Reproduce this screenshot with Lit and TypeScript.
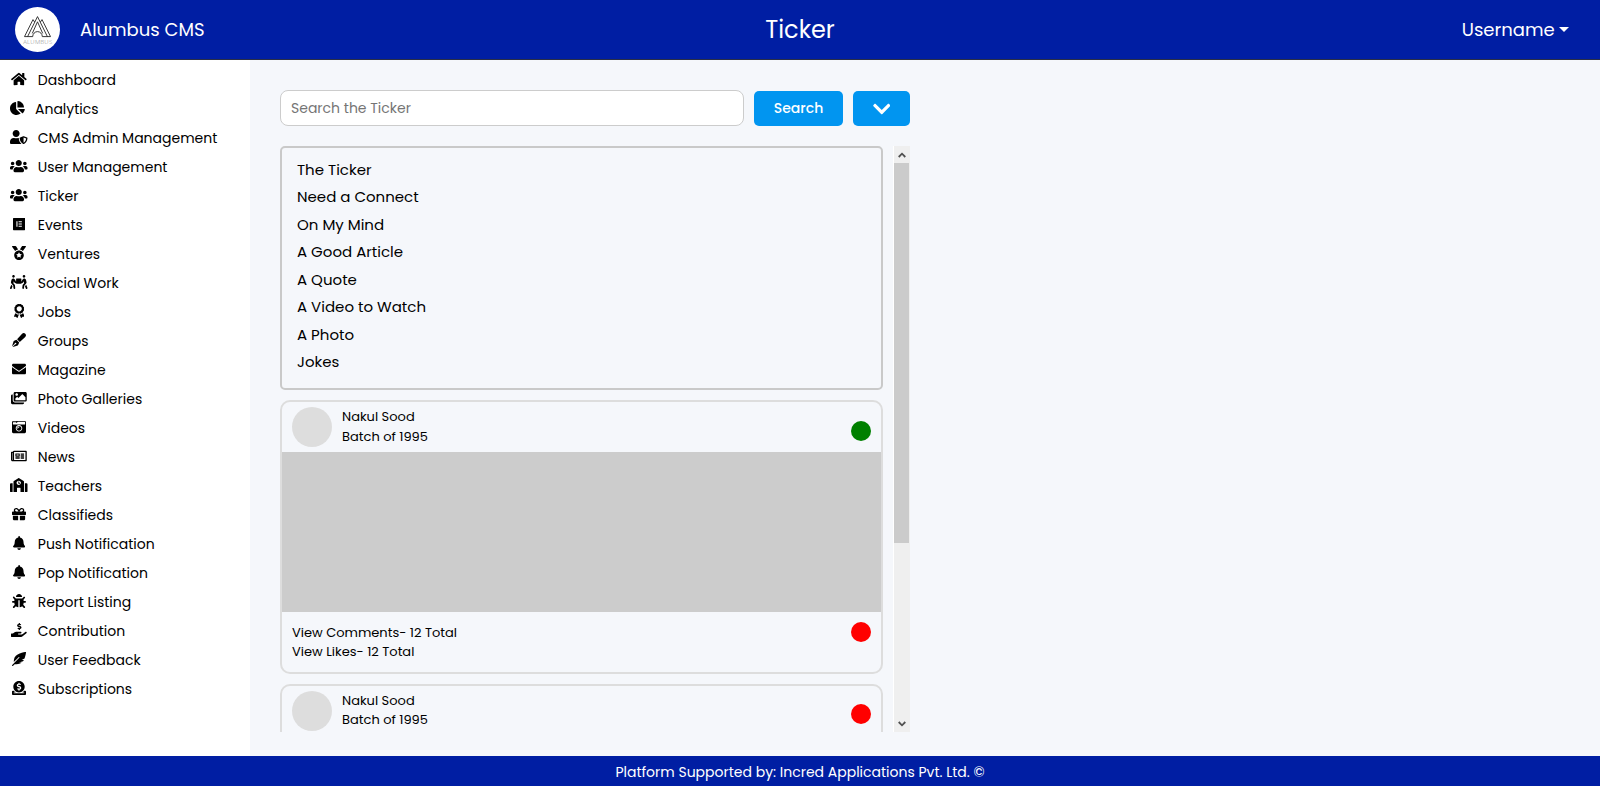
import { LitElement, html, css, svg } from "lit";
import { customElement } from "lit/decorators.js";

interface Glyph { w: number; d: string }

const ICONS: Record<string, Glyph> = {
  home: { w: 576, d: "M280.37 148.26L96 300.11V464a16 16 0 0 0 16 16l112.06-.29a16 16 0 0 0 15.92-16V368a16 16 0 0 1 16-16h64a16 16 0 0 1 16 16v95.64a16 16 0 0 0 16 16.05L464 480a16 16 0 0 0 16-16V300L295.67 148.26a12.19 12.19 0 0 0-15.3 0zM571.6 251.47L488 182.56V44.05a12 12 0 0 0-12-12h-56a12 12 0 0 0-12 12v72.61L318.47 43a48 48 0 0 0-61 0L4.34 251.47a12 12 0 0 0-1.6 16.9l25.5 31A12 12 0 0 0 45.15 301l235.22-193.74a12.19 12.19 0 0 1 15.3 0L530.9 301a12 12 0 0 0 16.9-1.6l25.5-31a12 12 0 0 0-1.7-16.93z" },
  pie: { w: 544, d: "M527.79 288H290.5l158.03 158.03c6.04 6.04 15.98 6.53 22.19.68 38.7-36.46 65.32-85.61 73.13-140.86 1.34-9.46-6.51-17.85-16.06-17.85zm-15.83-64.8C503.72 103.74 408.26 8.28 288.8.04 279.68-.59 272 7.1 272 16.24V240h223.77c9.14 0 16.82-7.68 16.19-16.8zM224 288V50.71c0-9.55-8.39-17.4-17.84-16.06C86.99 51.49-4.1 155.6.14 280.37 4.5 408.51 114.83 513.59 243.03 511.98c50.4-.63 96.97-16.87 135.26-44.03 7.9-5.6 8.42-17.23 1.57-24.08L224 288z" },
  userShield: { w: 640, d: "M622.3 271.1l-115.2-45c-4.1-1.6-12.6-3.7-22.2 0l-115.2 45c-10.7 4.2-17.7 14-17.7 24.9 0 111.6 68.7 188.8 132.9 213.9 9.6 3.7 18 1.6 22.2 0C558.4 489.9 640 420.5 640 296c0-10.9-7-20.7-17.7-24.9zM496 462.4V273.3l95.5 37.3c-5.6 87.1-60.9 135.4-95.5 151.8zM224 256c70.7 0 128-57.3 128-128S294.7 0 224 0 96 57.3 96 128s57.3 128 128 128zm96 40c0-2.5.8-4.8 1.1-7.2-2.5-.1-4.9-.8-7.5-.8h-16.7c-22.2 10.2-46.9 16-72.9 16s-50.6-5.8-72.9-16h-16.7C60.2 288 0 348.2 0 422.4V464c0 26.5 21.5 48 48 48h352c6.8 0 13.3-1.5 19.2-4-54-42.9-99.2-116.7-99.2-212z" },
  users: { w: 640, d: "M96 224c35.3 0 64-28.7 64-64s-28.7-64-64-64-64 28.7-64 64 28.7 64 64 64zm448 0c35.3 0 64-28.7 64-64s-28.7-64-64-64-64 28.7-64 64 28.7 64 64 64zm32 32h-64c-17.6 0-33.5 7.1-45.1 18.6 40.3 22.1 68.9 62 75.1 109.4h66c17.7 0 32-14.3 32-32v-32c0-35.3-28.7-64-64-64zm-256 0c61.9 0 112-50.1 112-112S381.9 32 320 32 208 82.1 208 144s50.1 112 112 112zm76.8 32h-8.3c-20.8 10-43.9 16-68.5 16s-47.6-6-68.5-16h-8.3C179.6 288 128 339.6 128 403.2V432c0 26.5 21.5 48 48 48h288c26.5 0 48-21.5 48-48v-28.8c0-63.6-51.6-115.2-115.2-115.2zm-223.7-13.4C161.5 263.1 145.6 256 128 256H64c-35.3 0-64 28.7-64 64v32c0 17.7 14.3 32 32 32h65.9c6.3-47.4 34.9-87.3 75.2-109.4z" },
  elementor: { w: 448, d: "M425.6 32H22.4C10 32 0 42 0 54.4v403.2C0 470 10 480 22.4 480h403.2c12.4 0 22.4-10 22.4-22.4V54.4C448 42 438 32 425.6 32M164.3 355.5h-39.8v-199h39.8v199zm159.3 0H204.1v-39.8h119.5v39.8zm0-79.6H204.1v-39.8h119.5v39.8zm0-79.7H204.1v-39.8h119.5v39.8z" },
  medal: { w: 512, d: "M223.75 130.75L154.62 15.54A31.997 31.997 0 0 0 127.18 0H16.03C3.08 0-4.5 14.57 2.92 25.18l111.27 158.96c29.72-27.77 67.52-46.83 109.56-53.39zM495.97 0H384.82c-11.24 0-21.66 5.9-27.44 15.54l-69.13 115.21c42.04 6.56 79.84 25.62 109.56 53.38L509.08 25.18C516.5 14.57 508.92 0 495.97 0zM256 160c-97.2 0-176 78.8-176 176s78.8 176 176 176 176-78.8 176-176-78.8-176-176-176zm92.52 157.26l-37.93 36.96 8.97 52.22c1.6 9.36-8.26 16.51-16.65 12.09L256 393.88l-46.9 24.65c-8.4 4.45-18.25-2.74-16.65-12.09l8.97-52.22-37.93-36.96c-6.82-6.64-3.05-18.23 6.35-19.59l52.43-7.64 23.43-47.52c2.11-4.28 6.19-6.39 10.28-6.39 4.11 0 8.22 2.14 10.33 6.39l23.43 47.52 52.43 7.64c9.4 1.36 13.17 12.95 6.35 19.59z" },
  carry: { w: 640, d: "M128 96c26.5 0 48-21.5 48-48S154.5 0 128 0 80 21.5 80 48s21.5 48 48 48zm384 0c26.5 0 48-21.5 48-48S538.5 0 512 0s-48 21.5-48 48 21.5 48 48 48zm125.7 372.1l-44-110-41.1 46.4-2 18.2 27.7 69.2c5 12.5 17 20.1 29.7 20.1 4 0 8-.7 11.9-2.3 16.4-6.6 24.4-25.2 17.8-41.6zm-34.2-209.8L585 178.1c-4.6-20-18.6-36.8-37.5-44.9-18.5-8-39-6.7-56.1 3.3-22.7 13.4-39.7 34.5-48.1 59.4L432 229.8 416 240v-96c0-8.8-7.2-16-16-16H240c-8.8 0-16 7.2-16 16v96l-16.1-10.2-11.3-33.9c-8.3-25-25.4-46-48.1-59.4-17.2-10-37.6-11.3-56.1-3.3-18.9 8.1-32.9 24.9-37.5 44.9l-18.4 80.2c-4.6 20 .7 41.2 14.4 56.7l67.2 75.9 10.1 92.6C130 499.8 143.8 512 160 512c1.2 0 2.3-.1 3.5-.2 17.6-1.9 30.2-17.7 28.3-35.3l-10.1-92.8c-1.5-13-6.9-25.1-15.6-35l-43.3-49 17.6-70.3 6.8 20.4c4.1 12.5 11.9 23.4 24.5 32.6l51.1 32.5c4.6 2.9 12.1 4.6 17.2 5h160c5.1-.4 12.6-2.1 17.2-5l51.1-32.5c12.6-9.2 20.4-20 24.5-32.6l6.8-20.4 17.6 70.3-43.3 49c-8.7 9.9-14.1 22-15.6 35l-10.1 92.8c-1.9 17.6 10.8 33.4 28.3 35.3 1.2.1 2.3.2 3.5.2 16.1 0 30-12.1 31.8-28.5l10.1-92.6 67.2-75.9c13.6-15.5 19-36.7 14.4-56.7zM46.3 358.1l-44 110c-6.6 16.4 1.4 35 17.8 41.6 16.8 6.6 35.1-1.7 41.6-17.8l27.7-69.2-2-18.2-41.1-46.4z" },
  award: { w: 384, d: "M97.12 362.63c-8.69-8.69-4.16-6.24-25.12-11.85-9.51-2.55-17.87-7.45-25.43-13.32L1.2 448.7c-4.39 10.77 3.81 22.47 15.43 22.03l52.69-2.01L105.56 507c8 8.44 22.04 5.81 26.43-4.96l52.05-127.62c-10.84 6.04-22.87 9.58-35.31 9.58-19.5 0-37.82-7.59-51.61-21.37zM382.8 448.7l-45.37-111.24c-7.56 5.88-15.92 10.77-25.43 13.32-21.07 5.64-16.45 3.18-25.12 11.85-13.79 13.78-32.12 21.37-51.62 21.37-12.44 0-24.47-3.55-35.31-9.58L252 502.04c4.39 10.77 18.44 13.4 26.43 4.96l36.25-38.28 52.69 2.01c11.62.44 19.82-11.27 15.43-22.03zM263 340c15.28-15.55 17.03-14.21 38.79-20.14 13.89-3.79 24.75-14.84 28.47-28.98 7.48-28.4 5.54-24.97 25.95-45.75 10.17-10.35 14.14-25.44 10.42-39.58-7.47-28.38-7.48-24.42 0-52.83 3.72-14.14-.25-29.23-10.42-39.58-20.41-20.78-18.47-17.36-25.95-45.75-3.72-14.14-14.58-25.19-28.47-28.98-27.88-7.61-24.52-5.62-44.95-26.41-10.17-10.35-25-14.4-38.89-10.61-27.87 7.6-23.98 7.61-51.9 0-13.89-3.79-28.72.25-38.89 10.61-20.41 20.78-17.05 18.8-44.94 26.41-13.89 3.79-24.75 14.84-28.47 28.98-7.47 28.39-5.54 24.97-25.95 45.75-10.17 10.35-14.15 25.44-10.42 39.58 7.47 28.36 7.48 24.4 0 52.82-3.72 14.14.25 29.23 10.42 39.59 20.41 20.78 18.47 17.35 25.95 45.75 3.72 14.14 14.58 25.19 28.47 28.98C104.6 325.96 106.27 325 121 340c13.23 13.47 33.84 15.88 49.74 5.82a39.676 39.676 0 0 1 42.53 0c15.89 10.06 36.5 7.65 49.73-5.82zM97.66 175.96c0-53.03 42.24-96.02 94.34-96.02s94.34 42.99 94.34 96.02-42.24 96.02-94.34 96.02-94.34-42.99-94.34-96.02z" },
  pen: { w: 512, d: "M79.18 282.94a32.005 32.005 0 0 0-20.24 20.24L0 480l4.69 4.69 92.89-92.89c-.66-2.56-1.57-5.03-1.57-7.8 0-17.67 14.33-32 32-32s32 14.33 32 32-14.33 32-32 32c-2.77 0-5.24-.91-7.8-1.57l-92.89 92.89L32 512l176.82-58.94a31.983 31.983 0 0 0 20.24-20.24l33.07-84.07-98.88-98.88-84.07 33.07zM369.25 28.32L186.14 227.81l97.85 97.85 199.49-183.11C568.4 67.48 443.73-55.94 369.25 28.32z" },
  envelope: { w: 512, d: "M502.3 190.8c3.9-3.1 9.7-.2 9.7 4.7V400c0 26.5-21.5 48-48 48H48c-26.5 0-48-21.5-48-48V195.6c0-5 5.7-7.8 9.7-4.7 22.4 17.4 52.1 39.5 154.1 113.6 21.1 15.4 56.7 47.8 92.2 47.6 35.7.3 72-32.8 92.3-47.6 102-74.1 131.6-96.3 154-113.7zM256 320c23.2.4 56.6-29.2 73.4-41.4 132.7-96.3 142.8-104.7 173.4-128.7 5.8-4.5 9.2-11.5 9.2-18.9v-19c0-26.5-21.5-48-48-48H48c-26.5 0-48 21.5-48 48v19c0 7.4 3.4 14.3 9.2 18.9 30.6 23.9 40.7 32.4 173.4 128.7 16.8 12.2 50.2 41.8 73.4 41.4z" },
  images: { w: 576, d: "M480 416v16c0 26.51-21.49 48-48 48H48c-26.51 0-48-21.49-48-48V176c0-26.51 21.49-48 48-48h16v208c0 44.112 35.888 80 80 80h336zm96-80V80c0-26.51-21.49-48-48-48H144c-26.51 0-48 21.49-48 48v256c0 26.51 21.49 48 48 48h384c26.51 0 48-21.49 48-48zM256 128c0 26.51-21.49 48-48 48s-48-21.49-48-48 21.49-48 48-48 48 21.49 48 48zm-96 144l55.515-55.515c4.686-4.686 12.284-4.686 16.971 0L272 256l135.515-135.515c4.686-4.686 12.284-4.686 16.971 0L528 224v112H160v-64z" },
  camera: { w: 512, d: "M48 32C21.5 32 0 53.5 0 80v352c0 26.5 21.5 48 48 48h416c26.5 0 48-21.5 48-48V80c0-26.5-21.5-48-48-48H48zm0 32h106c3.3 0 6 2.7 6 6v20c0 3.3-2.7 6-6 6H38c-3.3 0-6-2.7-6-6V80c0-8.8 7.2-16 16-16zm426 96H38c-3.3 0-6-2.7-6-6v-36c0-3.3 2.7-6 6-6h138l30.2-45.3c1.1-1.7 3-2.7 5-2.7H464c8.8 0 16 7.2 16 16v74c0 3.3-2.7 6-6 6zM256 424c-66.2 0-120-53.8-120-120s53.8-120 120-120 120 53.8 120 120-53.8 120-120 120zm0-208c-48.5 0-88 39.5-88 88s39.5 88 88 88 88-39.5 88-88-39.5-88-88-88zm-48 104c-8.8 0-16-7.2-16-16 0-35.3 28.7-64 64-64 8.8 0 16 7.2 16 16s-7.2 16-16 16c-17.6 0-32 14.4-32 32 0 8.8-7.2 16-16 16z" },
  newspaper: { w: 576, d: "M552 64H112c-20.858 0-38.643 13.377-45.248 32H24c-13.255 0-24 10.745-24 24v272c0 30.928 25.072 56 56 56h496c13.255 0 24-10.745 24-24V88c0-13.255-10.745-24-24-24zM48 392V144h16v248c0 4.411-3.589 8-8 8s-8-3.589-8-8zm480 8H111.422c.374-2.614.578-5.283.578-8V112h416v288zM172 280h136c6.627 0 12-5.373 12-12v-96c0-6.627-5.373-12-12-12H172c-6.627 0-12 5.373-12 12v96c0 6.627 5.373 12 12 12zm28-80h80v40h-80v-40zm-40 140v-24c0-6.627 5.373-12 12-12h136c6.627 0 12 5.373 12 12v24c0 6.627-5.373 12-12 12H172c-6.627 0-12-5.373-12-12zm192 0v-24c0-6.627 5.373-12 12-12h104c6.627 0 12 5.373 12 12v24c0 6.627-5.373 12-12 12H364c-6.627 0-12-5.373-12-12zm0-144v-24c0-6.627 5.373-12 12-12h104c6.627 0 12 5.373 12 12v24c0 6.627-5.373 12-12 12H364c-6.627 0-12-5.373-12-12zm0 72v-24c0-6.627 5.373-12 12-12h104c6.627 0 12 5.373 12 12v24c0 6.627-5.373 12-12 12H364c-6.627 0-12-5.373-12-12z" },
  school: { w: 640, d: "M0 224v272c0 8.84 7.16 16 16 16h80V192H32c-17.67 0-32 14.33-32 32zm360-48h-24v-40c0-4.42-3.58-8-8-8h-16c-4.42 0-8 3.58-8 8v64c0 4.42 3.58 8 8 8h48c4.42 0 8-3.58 8-8v-16c0-4.42-3.58-8-8-8zm137.75-63.96l-160-106.67a32.02 32.02 0 0 0-35.5 0l-160 106.67A32.002 32.002 0 0 0 128 138.66V512h128V368c0-8.84 7.16-16 16-16h96c8.84 0 16 7.16 16 16v144h128V138.67c0-10.7-5.35-20.7-14.25-26.63zM320 256c-44.18 0-80-35.82-80-80s35.82-80 80-80 80 35.82 80 80-35.82 80-80 80zm288-64h-64v320h80c8.84 0 16-7.16 16-16V224c0-17.67-14.33-32-32-32z" },
  gift: { w: 512, d: "M32 448c0 17.7 14.3 32 32 32h160V320H32v128zm256 32h160c17.7 0 32-14.3 32-32V320H288v160zm192-320h-42.1c6.2-12.1 10.1-25.5 10.1-40 0-48.5-39.5-88-88-88-41.6 0-68.5 21.3-103 68.3-34.5-47-61.4-68.3-103-68.3-48.5 0-88 39.5-88 88 0 14.5 3.8 27.9 10.1 40H32c-17.7 0-32 14.3-32 32v80c0 8.8 7.2 16 16 16h480c8.8 0 16-7.2 16-16v-80c0-17.7-14.3-32-32-32zm-326.1 0c-22.1 0-40-17.9-40-40s17.9-40 40-40c19.9 0 34.6 3.3 86.1 80h-86.1zm206.1 0h-86.1c51.4-76.5 65.7-80 86.1-80 22.1 0 40 17.9 40 40s-17.9 40-40 40z" },
  bell: { w: 448, d: "M224 512c35.32 0 63.97-28.65 63.97-64H160.03c0 35.35 28.65 64 63.97 64zm215.39-149.71c-19.32-20.76-55.47-51.99-55.47-154.29 0-77.7-54.48-139.9-127.94-155.16V32c0-17.67-14.32-32-31.98-32s-31.98 14.33-31.98 32v20.84C118.56 68.1 64.08 130.3 64.08 208c0 102.3-36.15 133.53-55.47 154.29-6 6.45-8.66 14.16-8.61 21.71.11 16.4 12.98 32 32.1 32h383.8c19.12 0 32-15.6 32.1-32 .05-7.55-2.61-15.27-8.61-21.71z" },
  bug: { w: 512, d: "M511.988 288.9c-.478 17.43-15.217 31.1-32.653 31.1H424v16c0 21.864-4.882 42.584-13.6 61.145l60.228 60.228c12.496 12.497 12.496 32.758 0 45.255-12.498 12.497-32.759 12.496-45.256 0l-54.736-54.736C345.886 467.965 314.351 480 280 480V236c0-6.627-5.373-12-12-12h-24c-6.627 0-12 5.373-12 12v244c-34.351 0-65.886-12.035-90.636-32.108l-54.736 54.736c-12.498 12.497-32.759 12.496-45.256 0-12.496-12.497-12.496-32.758 0-45.255l60.228-60.228C92.882 378.584 88 357.864 88 336v-16H32.666C15.23 320 .491 306.33.013 288.9-.484 270.816 14.028 256 32 256h56v-58.745l-46.628-46.628c-12.496-12.497-12.496-32.758 0-45.255 12.498-12.497 32.758-12.497 45.256 0L141.255 160h229.489l54.627-54.627c12.498-12.497 32.758-12.497 45.256 0 12.496 12.497 12.496 32.758 0 45.255L424 197.255V256h56c17.972 0 32.484 14.816 31.988 32.9zM257 0c-61.856 0-112 50.144-112 112h224C369 50.144 318.856 0 257 0z" },
  handUsd: { w: 576, d: "M271.06,144.3l54.27,14.3a8.59,8.59,0,0,1,6.63,8.1c0,4.6-4.09,8.4-9.12,8.4h-35.6a30,30,0,0,1-11.19-2.2c-5.24-2.2-11.28-1.7-15.3,2l-19,17.5a11.68,11.68,0,0,0-2.25,2.66,11.42,11.42,0,0,0,3.88,15.74,83.77,83.77,0,0,0,34.51,11.5V240c0,8.8,7.83,16,17.37,16h17.37c9.55,0,17.38-7.2,17.38-16V222.4c32.93-3.6,57.84-31,53.5-63-3.15-23-22.46-41.3-46.56-47.7L282.68,97.4a8.59,8.59,0,0,1-6.63-8.1c0-4.6,4.09-8.4,9.12-8.4h35.6A30,30,0,0,1,332,83.1c5.23,2.2,11.28,1.7,15.3-2l19-17.5A11.31,11.31,0,0,0,368.47,61a11.43,11.43,0,0,0-3.84-15.78,83.82,83.82,0,0,0-34.52-11.5V16c0-8.8-7.82-16-17.37-16H295.37C285.82,0,278,7.2,278,16V33.6c-32.89,3.6-57.85,31-53.51,63C227.63,119.6,247,137.9,271.06,144.3ZM565.3 328.1c-11.8-10.7-30.2-10-42.6 0L430.3 402c-11.3 9.1-25.4 14-40 14H272c-8.8 0-16-7.2-16-16s7.2-16 16-16h78.3c15.9 0 30.7-10.9 33.3-26.6 3.3-20-12.1-37.4-31.6-37.4H192c-27 0-53.1 9.3-74.1 26.3L71.4 384H16c-8.8 0-16 7.2-16 16v96c0 8.8 7.2 16 16 16h356.8c14.5 0 28.6-4.9 40-14L564 377c15.2-12.1 16.4-35.3 1.3-48.9z" },
  feather: { w: 512, d: "M512 0C460.22 3.56 96.44 38.2 71.01 287.61c-3.09 26.66-4.84 53.44-5.99 80.24l178.87-178.69c6.25-6.25 16.4-6.25 22.65 0s6.25 16.38 0 22.63L7.04 471.03c-9.38 9.37-9.38 24.57 0 33.94 9.38 9.37 24.59 9.37 33.98 0l57.13-57.07c42.09-.14 84.15-2.53 125.96-7.36 53.48-5.44 97.02-26.47 132.58-56.54H255.74l146.79-48.88c11.25-14.89 21.37-30.71 30.45-47.12h-81.14l106.54-53.21C500.29 132.86 510.19 26.26 512 0z" },
  donate: { w: 512, d: "M256 416c114.9 0 208-93.1 208-208S370.9 0 256 0 48 93.1 48 208s93.1 208 208 208zM233.8 97.4V80.6c0-9.2 7.4-16.6 16.6-16.6h11.1c9.2 0 16.6 7.4 16.6 16.6v17c15.5.8 30.5 6.1 43 15.4 5.6 4.1 6.2 12.3 1.2 17.1L306 145.6c-3.8 3.7-9.5 3.8-14 1-5.4-3.4-11.4-5.1-17.8-5.1h-38.9c-9 0-16.3 8.2-16.3 18.3 0 8.2 5 15.5 12.1 17.6l62.3 18.7c25.7 7.7 43.7 32.4 43.7 60.1 0 34-26.4 61.5-59.1 62.4v16.8c0 9.2-7.4 16.6-16.6 16.6h-11.1c-9.2 0-16.6-7.4-16.6-16.6v-17c-15.5-.8-30.5-6.1-43-15.4-5.6-4.1-6.2-12.3-1.2-17.1l16.3-15.5c3.8-3.7 9.5-3.8 14-1 5.4 3.4 11.4 5.1 17.8 5.1h38.9c9 0 16.3-8.2 16.3-18.3 0-8.2-5-15.5-12.1-17.6l-62.3-18.7c-25.7-7.7-43.7-32.4-43.7-60.1.1-34 26.4-61.5 59.1-62.4zM480 352h-32.5c-19.6 26-44.6 47.7-73 64h63.8c5.3 0 9.6 3.6 9.6 8v16c0 4.4-4.3 8-9.6 8H73.6c-5.3 0-9.6-3.6-9.6-8v-16c0-4.4 4.3-8 9.6-8h63.8c-28.4-16.3-53.3-38-73-64H32c-17.7 0-32 14.3-32 32v96c0 17.7 14.3 32 32 32h448c17.7 0 32-14.3 32-32v-96c0-17.7-14.3-32-32-32z" },
  chevron: { w: 448, d: "M207.029 381.476L12.686 187.132c-9.373-9.373-9.373-24.569 0-33.941l22.667-22.667c9.357-9.357 24.522-9.375 33.901-.04L224 284.505l154.745-154.021c9.379-9.335 24.544-9.317 33.901.04l22.667 22.667c9.373 9.373 9.373 24.569 0 33.941L240.971 381.476c-9.373 9.372-24.569 9.372-33.942 0z" },
};

const icon = (name: string, size = 14) => {
  const g = ICONS[name];
  return html`<svg width=${(g.w / 512) * size} height=${size} viewBox="0 0 ${g.w} 512" fill="currentColor">${svg`<path d=${g.d}></path>`}</svg>`;
};

const MENU: [string, string][] = [
  ["home", "Dashboard"],
  ["pie", "Analytics"],
  ["userShield", "CMS Admin Management"],
  ["users", "User Management"],
  ["users", "Ticker"],
  ["elementor", "Events"],
  ["medal", "Ventures"],
  ["carry", "Social Work"],
  ["award", "Jobs"],
  ["pen", "Groups"],
  ["envelope", "Magazine"],
  ["images", "Photo Galleries"],
  ["camera", "Videos"],
  ["newspaper", "News"],
  ["school", "Teachers"],
  ["gift", "Classifieds"],
  ["bell", "Push Notification"],
  ["bell", "Pop Notification"],
  ["bug", "Report Listing"],
  ["handUsd", "Contribution"],
  ["feather", "User Feedback"],
  ["donate", "Subscriptions"],
];

const CATEGORIES = [
  "The Ticker",
  "Need a Connect",
  "On My Mind",
  "A Good Article",
  "A Quote",
  "A Video to Watch",
  "A Photo",
  "Jokes",
];

@customElement("app-root")
class AppRoot extends LitElement {
  static styles = css`
    :host {
      display: flex;
      flex-direction: column;
      height: 786px;
      overflow: hidden;
      box-sizing: border-box;
      background: #f5f7fb;
      color: #000;
      font-family: Poppins, Inter, "Open Sans", sans-serif;
      font-size: 14px;
      line-height: 21px;
      white-space: nowrap;
    }
    * { box-sizing: border-box; }
    svg { display: block; flex: none; }

    .header {
      flex: none;
      height: 60px;
      display: grid;
      grid-template-columns: 1fr auto 1fr;
      align-items: center;
      padding: 0 31px 0 15px;
      background: #001ea3;
      border-bottom: 1px solid #2b2f45;
      color: #fff;
      font-size: 18px;
      line-height: 30px;
    }
    .brand { display: flex; align-items: center; gap: 20px; }
    .title { font-size: 24px; margin-left: 16px; }
    .user { display: flex; align-items: center; justify-content: flex-end; gap: 4.4px; }
    .caret { border: 5.4px solid transparent; border-top-color: #fff; border-bottom: 0; }

    .body { flex: 1; min-height: 0; display: flex; }
    .sidebar { width: 250px; flex: none; background: #fff; padding: 5px 10px; }
    .item { display: flex; align-items: center; height: 29px; gap: 10px; }
    .slot { width: 17.8px; display: flex; justify-content: center; padding-bottom: 1px; }
    .slot.tight { width: 15px; }
    .label { padding-top: 2px; }

    .main { padding: 30px 0 0 30px; width: 660px; display: flex; flex-direction: column; }
    .search { display: flex; align-items: flex-end; gap: 10px; height: 36px; }
    .field {
      width: 464px; height: 36px; border: 1px solid #ccc; border-radius: 8px;
      background: #fff; color: #757575; padding: 0 10px; display: flex; align-items: center;
    }
    .btn {
      height: 35px; border-radius: 5px; background: #0195f0; color: #fff;
      display: flex; align-items: center; justify-content: center;
    }
    .btn.go { width: 89px; font-weight: 500; }
    .btn.more { width: 57px; }

    .scroller { margin-top: 20px; height: 586px; display: flex; justify-content: space-between; overflow: hidden; }
    .feed { width: 603px; display: flex; flex-direction: column; gap: 10px; }
    .cats {
      flex: none; height: 244px; border: 2px solid #c9c9c9; border-radius: 5px;
      padding: 8.2px 15px; font-size: 15px; line-height: 22.5px;
    }
    .cat { height: 27.5px; display: flex; align-items: center; }
    .card { flex: none; height: 273.5px; border: 2px solid #ddd; border-radius: 10px; font-size: 13px; line-height: 19.5px; }
    .top { height: 50px; padding: 0 10px; display: flex; align-items: center; gap: 10px; }
    .avatar { width: 40px; height: 40px; border-radius: 50%; background: #ddd; }
    .who { flex: 1; display: flex; flex-direction: column; padding-bottom: 1px; }
    .dot { width: 20px; height: 20px; border-radius: 50%; background: red; }
    .top .dot { margin-top: 7.8px; }
    .dot.on { background: green; }
    .photo { height: 160px; background: #ccc; }
    .stats { padding: 10px; display: flex; justify-content: space-between; }
    .counts { display: flex; flex-direction: column; padding-top: .6px; }

    .bar { width: 17px; background: linear-gradient(90deg, #fff 1px, #efefef 1px); display: flex; flex-direction: column; padding: 0 1px; }
    .arrow { height: 17px; flex: none; display: flex; align-items: center; justify-content: center; }
    .thumb { height: 380px; background: #cbcbcb; }
    .gap { flex: 1; }

    .footer {
      flex: none; height: 30px; padding-top: 2px; background: #001ea3; color: #fff;
      display: flex; align-items: center; justify-content: center;
    }
    .logo-text { font: 300 6px "Open Sans", sans-serif; fill: #888; }
  `;

  private card(on: boolean) {
    return html`
      <div class="card">
        <div class="top">
          <div class="avatar"></div>
          <div class="who"><span>Nakul Sood</span><span>Batch of 1995</span></div>
          <div class="dot ${on ? "on" : ""}"></div>
        </div>
        ${on
          ? html`<div class="photo"></div>
              <div class="stats">
                <div class="counts"><span>View Comments- 12 Total</span><span>View Likes- 12 Total</span></div>
                <div class="dot"></div>
              </div>`
          : ""}
      </div>`;
  }

  private arrow(up: boolean) {
    return html`<div class="arrow"><svg width="8" height="6" viewBox="0 0 8 6" fill="none" stroke="#505050" stroke-width="1.8">
      <path d=${up ? "M.7 5L4 1.7 7.3 5" : "M.7 1L4 4.3 7.3 1"}></path></svg></div>`;
  }

  render() {
    return html`
      <div class="header">
        <div class="brand">
          <svg width="45" height="45" viewBox="0 0 45 45">
            <circle cx="22.5" cy="22.5" r="22.5" fill="#fff"></circle>
            <path fill="none" stroke="#222" stroke-width=".9" d="M19.6 15L18 12.6L9.5 29.6H17.7A4.8 5 0 0 1 27.3 29.6H35.5L27 12.6L25.4 15M12.6 29.6L22.5 9.6L32.4 29.6M17.3 26.4L22.5 14.8L27.7 26.4"></path>
            <text class="logo-text" x="8.2" y="37" textLength="29" lengthAdjust="spacing">ALUMBUS</text>
          </svg>
          <span>Alumbus CMS</span>
        </div>
        <div class="title">Ticker</div>
        <div class="user"><span>Username</span><span class="caret"></span></div>
      </div>
      <div class="body">
        <div class="sidebar">
          ${MENU.map(([ic, label]) => html`<div class="item"><span class="slot ${ic === "pie" ? "tight" : ""}">${icon(ic)}</span><span class="label">${label}</span></div>`)}
        </div>
        <div class="main">
          <div class="search">
            <div class="field">Search the Ticker</div>
            <div class="btn go">Search</div>
            <div class="btn more">${icon("chevron", 20)}</div>
          </div>
          <div class="scroller">
            <div class="feed">
              <div class="cats">${CATEGORIES.map((c) => html`<div class="cat">${c}</div>`)}</div>
              ${this.card(true)}${this.card(false)}
            </div>
            <div class="bar">${this.arrow(true)}<div class="thumb"></div><div class="gap"></div>${this.arrow(false)}</div>
          </div>
        </div>
      </div>
      <div class="footer">Platform Supported by: Incred Applications Pvt. Ltd. ©</div>
    `;
  }
}
